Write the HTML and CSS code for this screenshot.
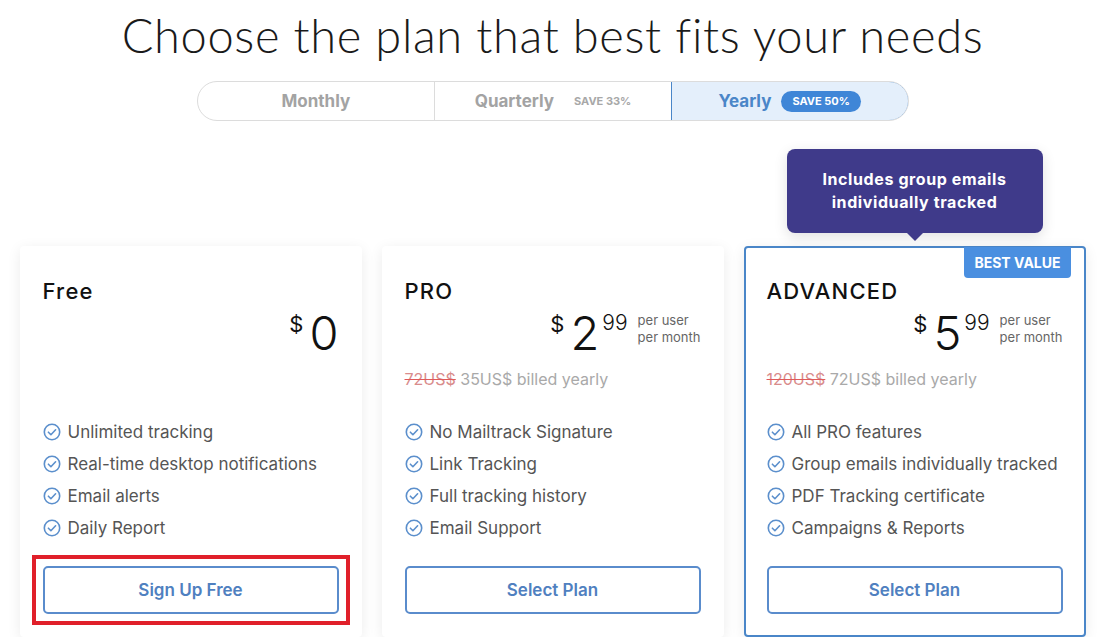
FILE: index.html
```html
<!DOCTYPE html>
<html>
<head>
<meta charset="utf-8">
<link rel="stylesheet" href="styles.css">
</head>
<body>
<div class="page">
  <h1 class="title">Choose the plan that best fits your needs</h1>
  <div class="toggle">
    <div class="seg">Monthly</div>
    <div class="seg">Quarterly <span class="save">SAVE 33%</span></div>
    <div class="seg active">Yearly <span class="pill">SAVE 50%</span></div>
  </div>
  <div class="cards">
    <div class="card">
      <div class="plan">Free</div>
      <div class="price">
        <span class="cur">$</span><span class="num">0</span>
      </div>
      <div class="billed"></div>
      <ul class="features">
        <li><svg class="chk" viewBox="0 0 18 18"><circle cx="9" cy="9" r="7.7"/><path d="M5.4 9.2l2.5 2.5 4.7-4.9"/></svg>Unlimited tracking</li>
        <li><svg class="chk" viewBox="0 0 18 18"><circle cx="9" cy="9" r="7.7"/><path d="M5.4 9.2l2.5 2.5 4.7-4.9"/></svg>Real-time desktop notifications</li>
        <li><svg class="chk" viewBox="0 0 18 18"><circle cx="9" cy="9" r="7.7"/><path d="M5.4 9.2l2.5 2.5 4.7-4.9"/></svg>Email alerts</li>
        <li><svg class="chk" viewBox="0 0 18 18"><circle cx="9" cy="9" r="7.7"/><path d="M5.4 9.2l2.5 2.5 4.7-4.9"/></svg>Daily Report</li>
      </ul>
      <div class="hl"><button class="btn">Sign Up Free</button></div>
    </div>
    <div class="card">
      <div class="plan">PRO</div>
      <div class="price">
        <span class="cur">$</span><span class="num">2</span><span class="cents">99</span>
        <span class="per">per user<br>per month</span>
      </div>
      <div class="billed"><s>72US$</s> 35US$ billed yearly</div>
      <ul class="features">
        <li><svg class="chk" viewBox="0 0 18 18"><circle cx="9" cy="9" r="7.7"/><path d="M5.4 9.2l2.5 2.5 4.7-4.9"/></svg>No Mailtrack Signature</li>
        <li><svg class="chk" viewBox="0 0 18 18"><circle cx="9" cy="9" r="7.7"/><path d="M5.4 9.2l2.5 2.5 4.7-4.9"/></svg>Link Tracking</li>
        <li><svg class="chk" viewBox="0 0 18 18"><circle cx="9" cy="9" r="7.7"/><path d="M5.4 9.2l2.5 2.5 4.7-4.9"/></svg>Full tracking history</li>
        <li><svg class="chk" viewBox="0 0 18 18"><circle cx="9" cy="9" r="7.7"/><path d="M5.4 9.2l2.5 2.5 4.7-4.9"/></svg>Email Support</li>
      </ul>
      <button class="btn">Select Plan</button>
    </div>
    <div class="card best">
      <div class="tooltip">Includes group emails<br>individually tracked</div>
      <div class="badge">BEST VALUE</div>
      <div class="plan">ADVANCED</div>
      <div class="price">
        <span class="cur">$</span><span class="num">5</span><span class="cents">99</span>
        <span class="per">per user<br>per month</span>
      </div>
      <div class="billed"><s>120US$</s> 72US$ billed yearly</div>
      <ul class="features">
        <li><svg class="chk" viewBox="0 0 18 18"><circle cx="9" cy="9" r="7.7"/><path d="M5.4 9.2l2.5 2.5 4.7-4.9"/></svg>All PRO features</li>
        <li><svg class="chk" viewBox="0 0 18 18"><circle cx="9" cy="9" r="7.7"/><path d="M5.4 9.2l2.5 2.5 4.7-4.9"/></svg>Group emails individually tracked</li>
        <li><svg class="chk" viewBox="0 0 18 18"><circle cx="9" cy="9" r="7.7"/><path d="M5.4 9.2l2.5 2.5 4.7-4.9"/></svg>PDF Tracking certificate</li>
        <li><svg class="chk" viewBox="0 0 18 18"><circle cx="9" cy="9" r="7.7"/><path d="M5.4 9.2l2.5 2.5 4.7-4.9"/></svg>Campaigns &amp; Reports</li>
      </ul>
      <button class="btn">Select Plan</button>
    </div>
  </div>
</div>
</body>
</html>
```

FILE: styles.css
```css
* { box-sizing: border-box; }
html, body { margin: 0; padding: 0; background: #fff; }
body { font-family: "Inter", "Liberation Sans", sans-serif; color: #222; overflow: hidden; }

.page { width: 1105px; display: flex; flex-direction: column; align-items: center; }

.title {
  margin: 7px 0 0;
  font-family: "Lato", sans-serif;
  font-weight: 300;
  font-size: 47px;
  line-height: 56px;
  color: #1a1a1a;
  letter-spacing: 0.65px;
}

.toggle {
  margin-top: 18px;
  width: 712px;
  height: 40px;
  border: 1px solid #dcdcdc;
  border-radius: 20px;
  display: grid;
  grid-template-columns: 1fr 1fr 1fr;
  overflow: hidden;
}
.seg {
  display: flex;
  align-items: center;
  justify-content: center;
  gap: 20px;
  font-weight: 700;
  font-size: 17px;
  color: #a3a3a3;
  border-left: 1px solid #dcdcdc;
}
.seg:first-child { border-left: none; }
.seg.active {
  background: #e4effb;
  color: #4a86c8;
  border: 1px solid #4a86c8;
  border-radius: 0 20px 20px 0;
  margin: -1px -1px -1px 0;
  gap: 10px;
}
.save { font-size: 11px; color: #a8a8a8; font-weight: 700; }
.pill {
  background: #3f86d7;
  color: #fff;
  font-size: 11px;
  font-weight: 700;
  border-radius: 11px;
  height: 21px;
  padding: 0 11px;
  display: inline-flex;
  align-items: center;
}

.cards {
  margin-top: 125px;
  display: grid;
  grid-template-columns: repeat(3, 342px);
  gap: 20px;
}
.card {
  position: relative;
  background: #fff;
  border-radius: 4px;
  box-shadow: 0 3px 14px rgba(0,0,0,0.08);
  padding: 32px 23px 23px;
  height: 391px;
  display: flex;
  flex-direction: column;
}
.card.best { border: 2px solid #4a86c8; padding: 30px 21px 21px; }

.plan { font-size: 22px; font-weight: 500; line-height: 26px; color: #111; letter-spacing: 1.2px; }

.price {
  margin-top: 4px;
  height: 50px;
  display: flex;
  justify-content: flex-end;
  align-items: flex-start;
  color: #111;
}
.cur { font-size: 22px; line-height: 22px; margin-top: 5px; margin-right: 6px; }
.num { font-size: 47px; line-height: 50px; font-weight: 300; }
.cents { font-size: 21px; line-height: 22px; margin-top: 4px; margin-left: 3px; font-weight: 300; }
.per { font-size: 13px; line-height: 17px; color: #666; margin-left: 10px; margin-top: 4px; }

.billed { margin-top: 10px; height: 22px; line-height: 22px; font-size: 16px; color: #a9a9a9; }
.billed s { color: #d98c8c; text-decoration-color: #e05a5a; }

.features { list-style: none; margin: 26px 0 0; padding: 0; }
.features li {
  height: 32px;
  display: flex;
  align-items: center;
  font-size: 17px;
  color: #555;
}
.chk { width: 18px; height: 18px; margin-right: 7px; fill: none; stroke: #5b8fcc; stroke-width: 1.6; stroke-linecap: round; stroke-linejoin: round; }

.btn {
  margin-top: auto;
  height: 48px;
  width: 100%;
  background: #fff;
  border: 2px solid #5a8ccc;
  border-radius: 5px;
  color: #4f80c0;
  font-family: inherit;
  font-weight: 600;
  font-size: 17px;
  display: block;
}
.hl {
  margin: auto -11px -11px;
  border: 4px solid #e0202a;
  padding: 7px;
}
.hl .btn { margin-top: 0; }

.badge {
  position: absolute;
  top: -1px;
  right: 13px;
  background: #4a8fe0;
  color: #fff;
  font-size: 14px;
  font-weight: 700;
  height: 31px;
  padding: 0 10px;
  display: flex;
  align-items: center;
  border-radius: 0 0 4px 4px;
}

.tooltip {
  position: absolute;
  top: -99px;
  left: 41px;
  width: 256px;
  height: 84px;
  background: #3f3a8a;
  color: #fff;
  border-radius: 8px;
  font-weight: 700;
  font-size: 16px;
  line-height: 23px;
  letter-spacing: 0.6px;
  display: flex;
  align-items: center;
  justify-content: center;
  text-align: center;
  box-shadow: 0 4px 14px rgba(0,0,0,0.12);
}
.tooltip::after {
  content: "";
  position: absolute;
  left: 50%;
  bottom: -8px;
  margin-left: -8px;
  border-left: 8px solid transparent;
  border-right: 8px solid transparent;
  border-top: 8px solid #3f3a8a;
}
```
